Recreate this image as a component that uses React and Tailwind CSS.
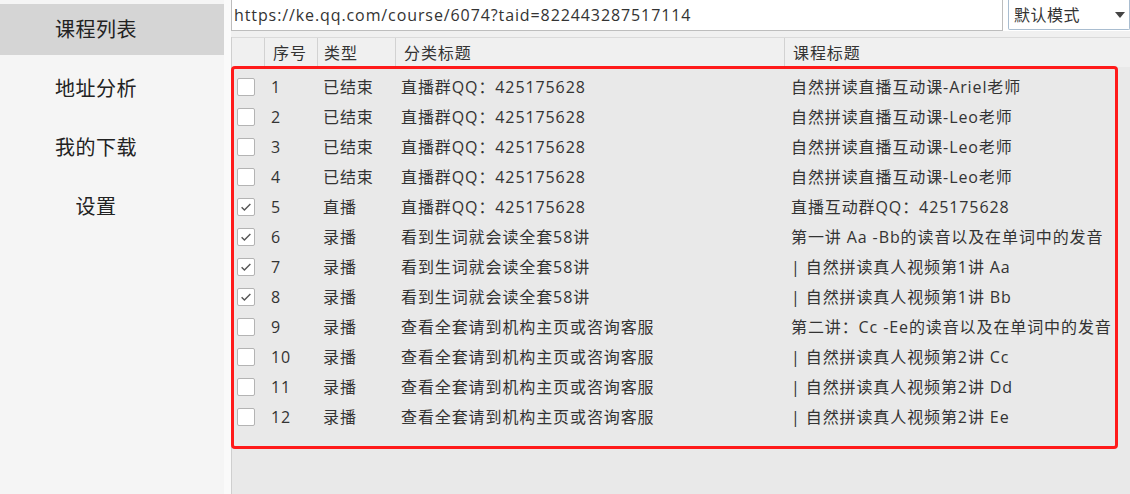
const rows = [
  { n: 1, type: '已结束', cat: '直播群QQ：425175628', title: '自然拼读直播互动课-Ariel老师', checked: false },
  { n: 2, type: '已结束', cat: '直播群QQ：425175628', title: '自然拼读直播互动课-Leo老师', checked: false },
  { n: 3, type: '已结束', cat: '直播群QQ：425175628', title: '自然拼读直播互动课-Leo老师', checked: false },
  { n: 4, type: '已结束', cat: '直播群QQ：425175628', title: '自然拼读直播互动课-Leo老师', checked: false },
  { n: 5, type: '直播', cat: '直播群QQ：425175628', title: '直播互动群QQ：425175628', checked: true },
  { n: 6, type: '录播', cat: '看到生词就会读全套58讲', title: '第一讲 Aa -Bb的读音以及在单词中的发音', checked: true },
  { n: 7, type: '录播', cat: '看到生词就会读全套58讲', title: '| 自然拼读真人视频第1讲 Aa', checked: true },
  { n: 8, type: '录播', cat: '看到生词就会读全套58讲', title: '| 自然拼读真人视频第1讲 Bb', checked: true },
  { n: 9, type: '录播', cat: '查看全套请到机构主页或咨询客服', title: '第二讲：Cc -Ee的读音以及在单词中的发音', checked: false },
  { n: 10, type: '录播', cat: '查看全套请到机构主页或咨询客服', title: '| 自然拼读真人视频第2讲 Cc', checked: false },
  { n: 11, type: '录播', cat: '查看全套请到机构主页或咨询客服', title: '| 自然拼读真人视频第2讲 Dd', checked: false },
  { n: 12, type: '录播', cat: '查看全套请到机构主页或咨询客服', title: '| 自然拼读真人视频第2讲 Ee', checked: false },
]

const menu = ['课程列表', '地址分析', '我的下载', '设置']

function CheckBox({ checked }) {
  return (
    <span className="flex h-[18px] w-[18px] items-center justify-center rounded-[2px] border border-[#b4b4b4] bg-white">
      {checked && (
        <svg viewBox="0 0 16 16" className="h-[14px] w-[14px]" fill="none" aria-hidden="true">
          <path d="M3 8.2l3.2 3.3L13 4.5" stroke="#555" strokeWidth="1.6" />
        </svg>
      )}
    </span>
  )
}

export default function App() {
  return (
    <div
      className="flex h-[494px] w-[1130px] overflow-hidden bg-[#fafafa] text-[#333]"
      style={{ fontFamily: '"Open Sans", "Noto Sans CJK SC", sans-serif' }}
    >
      <aside className="flex w-[224px] shrink-0 flex-col gap-[8px] bg-[#f5f5f5] pt-[4px]">
        {menu.map((m, i) => (
          <div
            key={m}
            className={`flex h-[51px] items-center justify-center pr-[32px] text-[20px] tracking-[0.5px] text-[#222] ${
              i === 0 ? 'bg-[#d5d5d5]' : ''
            }`}
          >
            {m}
          </div>
        ))}
      </aside>

      <main className="ml-[7px] flex min-w-0 flex-1 flex-col bg-[#f0f0f0]">
        <div className="flex h-[31px] shrink-0 gap-[5px] bg-white">
          <div className="flex h-[31px] w-[772px] items-center border border-t-0 border-[#bdbdbd] pl-[2px] text-[16px] tracking-[0.9px] text-[#333]">
            https://ke.qq.com/course/6074?taid=822443287517114
          </div>
          <div className="flex h-[30px] flex-1 items-center justify-between rounded-b-[2px] border border-t-0 border-[#a9bdd0] pl-[5px] pr-[4px] text-[16px] tracking-[0.5px]">
            <span>默认模式</span>
            <svg viewBox="0 0 10 6" className="h-[6px] w-[10px]" aria-hidden="true">
              <path d="M0 0h10L5 6z" fill="#444" />
            </svg>
          </div>
        </div>

        <div className="relative mt-[6px] flex flex-1 flex-col border-l border-[#cfcfcf] bg-[#e9e9e9] tracking-[0.9px]">
          <div className="grid h-[30px] shrink-0 grid-cols-[32px_53px_78px_389px_1fr] border-t border-[#dadada] bg-[#f0f0f0] text-[16px] text-[#333]">
            <div />
            <div className="flex items-center border-l border-[#d2d2d2] pl-[8px]">序号</div>
            <div className="flex items-center border-l border-[#d2d2d2] pl-[6px]">类型</div>
            <div className="flex items-center border-l border-[#d2d2d2] pl-[8px]">分类标题</div>
            <div className="flex items-center border-l border-[#d2d2d2] pl-[8px]">课程标题</div>
          </div>

          <div className="pt-[5px]">
            {rows.map((r) => (
              <div
                key={r.n}
                className="grid h-[30px] grid-cols-[32px_53px_78px_389px_1fr] items-center text-[16px] text-[#333]"
              >
                <div className="pl-[5px]">
                  <CheckBox checked={r.checked} />
                </div>
                <div className="pl-[7px]">{r.n}</div>
                <div className="pl-[6px]">{r.type}</div>
                <div className="pl-[6px]">{r.cat}</div>
                <div className="whitespace-nowrap pl-[7px]">{r.title}</div>
              </div>
            ))}
          </div>

          <div className="pointer-events-none absolute left-[-1px] top-[29px] h-[383px] w-[887px] rounded-[4px] border-[3px] border-[#ff1a1a]" />
        </div>
      </main>
    </div>
  )
}
